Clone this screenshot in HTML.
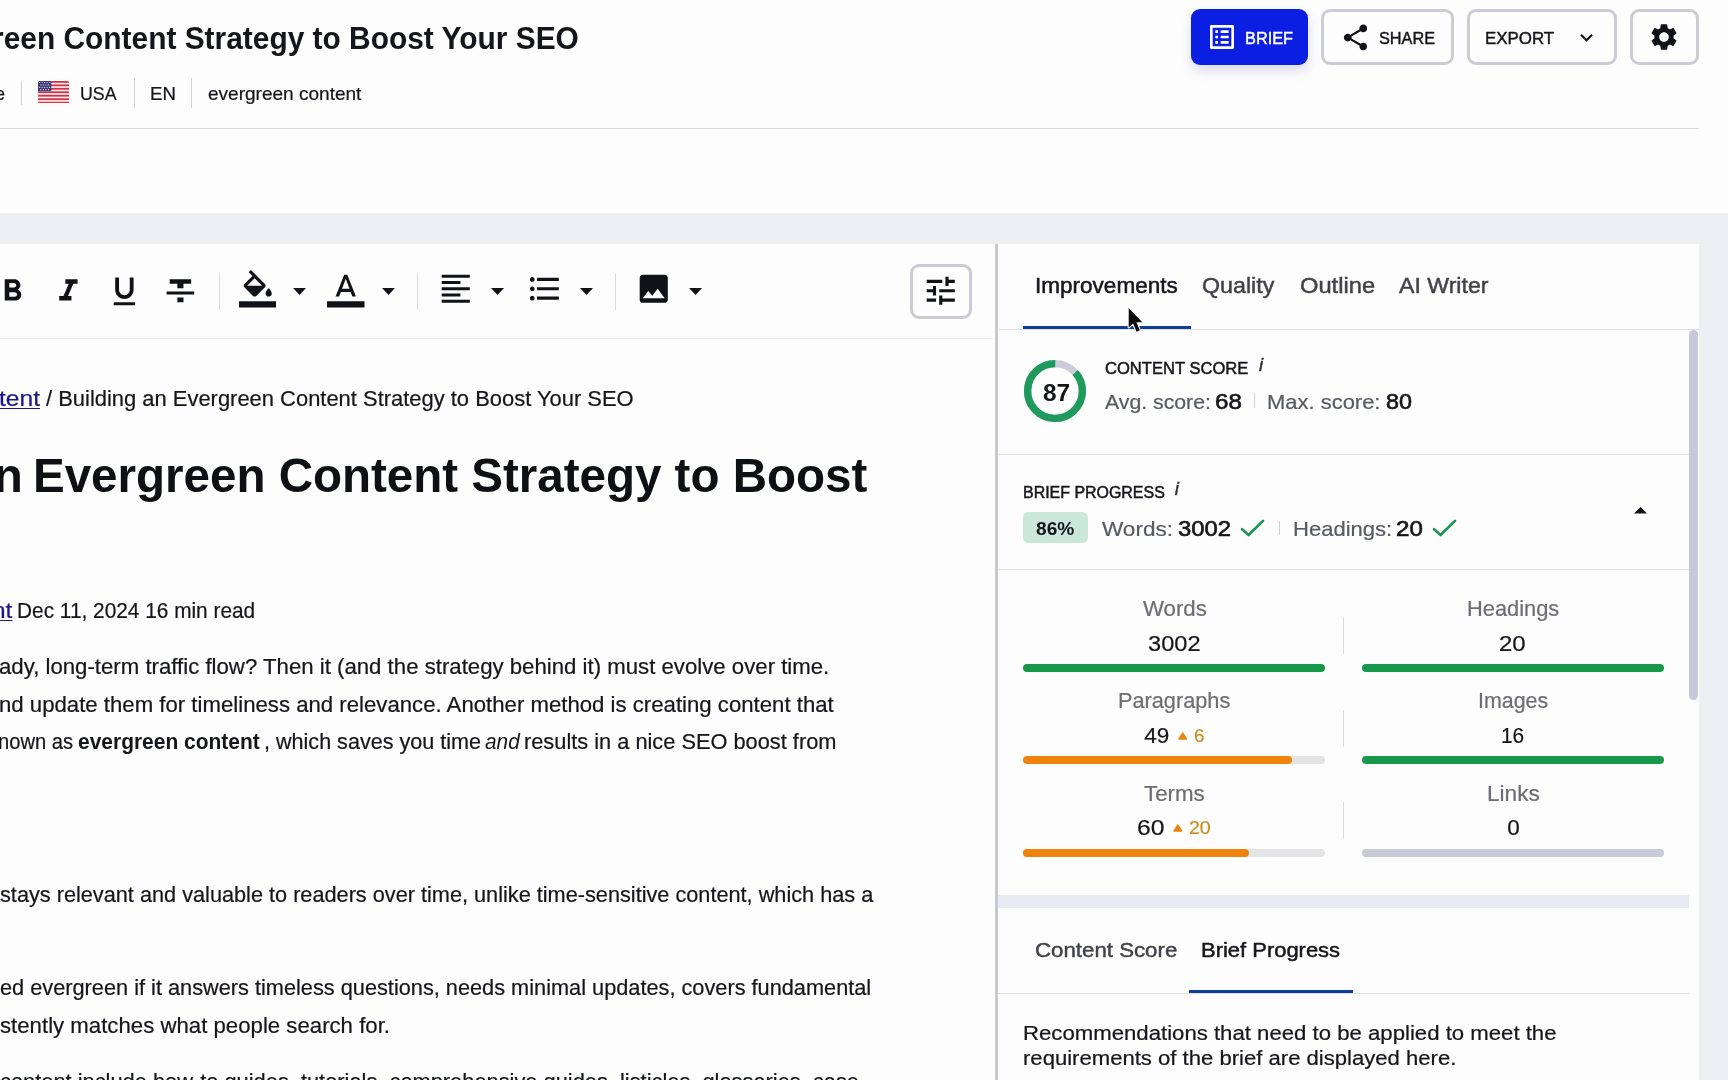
<!DOCTYPE html>
<html lang="en">
<head>
<meta charset="utf-8">
<title>Building an Evergreen Content Strategy to Boost Your SEO</title>
<style>
*{box-sizing:border-box;margin:0;padding:0}
html,body{width:1728px;height:1080px;overflow:hidden;background:#eeeff3}
body{position:relative;will-change:transform;font-family:"Liberation Sans",sans-serif;color:#15161c}
.abs,.t,svg.i{position:absolute}
.t{white-space:nowrap;line-height:1;display:block;transform-origin:0 0;color:#15161c;text-decoration:none}
a.t{text-decoration:underline}
.hdr{left:0;top:0;width:1728px;height:213px;background:#fdfdfd}
.hline{left:0;top:127.5px;width:1699px;height:1.5px;background:#d9dadd}
.vd{width:1px;background:#d2d3d8}
.btn{top:9px;height:56px;border:3px solid #cbccd5;border-radius:9px;background:#fdfdfd}
.btn.primary{border:0;background:#0b1fe3;box-shadow:0 6px 12px rgba(60,70,160,.18)}
.editor{left:0;top:244px;width:995px;height:836px;background:#fdfdfd}
.split{left:995px;top:244px;width:3px;height:836px;background:#c9c8d5}
.side{left:998px;top:244px;width:701px;height:836px;background:#fdfdfd}
.tbline{left:0;top:338px;width:993px;height:1px;background:#ececee}
.sline{height:1px;background:#e3e3e6;left:998px;width:691px}
.bar{height:8px;border-radius:4px}
.g{background:#18984a}.o{background:#ee830d}.tr{background:#e4e4e6}.n{background:#c9cad6}
.cd{width:1px;background:#dcdce0;left:1342.5px}
</style>
</head>
<body>
<!-- ===== top header ===== -->
<header>
<div class="abs hdr"></div>
<div class="abs hline"></div>
<div class="abs vd" style="left:21.3px;top:80.5px;height:24px"></div>
<div class="abs vd" style="left:133.6px;top:78px;height:30px"></div>
<div class="abs vd" style="left:191.3px;top:78px;height:30px"></div>
<svg class="i" style="left:38px;top:80.5px" width="31.3" height="22.5" viewBox="0 0 31.3 22.5"><defs><clipPath id="fc"><rect width="31.3" height="22.5" rx="2.2"/></clipPath></defs><g clip-path="url(#fc)"><rect width="31.3" height="22.5" fill="#fbeaec"/><rect y="0.00" width="31.3" height="1.73" fill="#d23145"/><rect y="3.46" width="31.3" height="1.73" fill="#d23145"/><rect y="6.92" width="31.3" height="1.73" fill="#d23145"/><rect y="10.38" width="31.3" height="1.73" fill="#d23145"/><rect y="13.85" width="31.3" height="1.73" fill="#d23145"/><rect y="17.31" width="31.3" height="1.73" fill="#d23145"/><rect y="20.77" width="31.3" height="1.73" fill="#d23145"/><rect width="13.3" height="10.2" fill="#3b3b78"/><circle cx="1.60" cy="1.50" r="0.62" fill="#e9e9f4"/><circle cx="4.10" cy="1.50" r="0.62" fill="#e9e9f4"/><circle cx="6.60" cy="1.50" r="0.62" fill="#e9e9f4"/><circle cx="9.10" cy="1.50" r="0.62" fill="#e9e9f4"/><circle cx="11.60" cy="1.50" r="0.62" fill="#e9e9f4"/><circle cx="2.85" cy="3.90" r="0.62" fill="#e9e9f4"/><circle cx="5.35" cy="3.90" r="0.62" fill="#e9e9f4"/><circle cx="7.85" cy="3.90" r="0.62" fill="#e9e9f4"/><circle cx="10.35" cy="3.90" r="0.62" fill="#e9e9f4"/><circle cx="1.60" cy="6.30" r="0.62" fill="#e9e9f4"/><circle cx="4.10" cy="6.30" r="0.62" fill="#e9e9f4"/><circle cx="6.60" cy="6.30" r="0.62" fill="#e9e9f4"/><circle cx="9.10" cy="6.30" r="0.62" fill="#e9e9f4"/><circle cx="11.60" cy="6.30" r="0.62" fill="#e9e9f4"/><circle cx="2.85" cy="8.70" r="0.62" fill="#e9e9f4"/><circle cx="5.35" cy="8.70" r="0.62" fill="#e9e9f4"/><circle cx="7.85" cy="8.70" r="0.62" fill="#e9e9f4"/><circle cx="10.35" cy="8.70" r="0.62" fill="#e9e9f4"/></g></svg>
<!-- buttons -->
<div class="abs btn primary" style="left:1191px;width:117px"></div>
<div class="abs btn" style="left:1321px;width:133px"></div>
<div class="abs btn" style="left:1467px;width:150px"></div>
<div class="abs btn" style="left:1630px;width:69px"></div>
<svg class="i" style="left:1205.9px;top:20.9px" width="32" height="32" viewBox="0 0 24 24"><path fill="#ffffff" d="M19 5v14H5V5h14m1.1-2H3.9c-.5 0-.9.4-.9.9v16.2c0 .4.4.9.9.9h16.2c.4 0 .9-.5.9-.9V3.9c0-.5-.5-.9-.9-.9zM11 7h6v2h-6V7zm0 4h6v2h-6v-2zm0 4h6v2h-6zM7 7h2v2H7zm0 4h2v2H7zm0 4h2v2H7z"/></svg>
<svg class="i" style="left:1340.1px;top:21.6px" width="31" height="31" viewBox="0 0 24 24"><path fill="#111217" d="M18 16.08c-.76 0-1.44.3-1.96.77L8.91 12.7c.05-.23.09-.46.09-.7s-.04-.47-.09-.7l7.05-4.11c.54.5 1.25.81 2.04.81 1.66 0 3-1.34 3-3s-1.34-3-3-3-3 1.34-3 3c0 .24.04.47.09.7L8.04 9.81C7.5 9.31 6.79 9 6 9c-1.66 0-3 1.34-3 3s1.34 3 3 3c.79 0 1.5-.31 2.04-.81l7.12 4.16c-.05.21-.08.43-.08.65 0 1.61 1.31 2.92 2.92 2.92 1.61 0 2.92-1.31 2.92-2.92s-1.31-2.92-2.92-2.92z"/></svg>
<svg class="i" style="left:1573.8px;top:24.9px" width="25" height="25" viewBox="0 0 24 24"><path fill="#111217" d="M7.41 8.59L12 13.17l4.59-4.58L18 10l-6 6-6-6 1.41-1.41z"/></svg>
<svg class="i" style="left:1648px;top:20.9px" width="32" height="32" viewBox="0 0 24 24"><path fill="#111217" d="M19.14 12.94c.04-.3.06-.61.06-.94 0-.32-.02-.64-.07-.94l2.03-1.58c.18-.14.23-.41.12-.61l-1.92-3.32c-.12-.22-.37-.29-.59-.22l-2.39.96c-.5-.38-1.03-.7-1.62-.94l-.36-2.54c-.04-.24-.24-.41-.48-.41h-3.84c-.24 0-.43.17-.47.41l-.36 2.54c-.59.24-1.13.57-1.62.94l-2.39-.96c-.22-.08-.47 0-.59.22L2.74 8.87c-.12.21-.08.47.12.61l2.03 1.58c-.05.3-.09.63-.09.94s.02.64.07.94l-2.03 1.58c-.18.14-.23.41-.12.61l1.92 3.32c.12.22.37.29.59.22l2.39-.96c.5.38 1.03.7 1.62.94l.36 2.54c.05.24.24.41.48.41h3.84c.24 0 .44-.17.47-.41l.36-2.54c.59-.24 1.13-.56 1.62-.94l2.39.96c.22.08.47 0 .59-.22l1.92-3.32c.12-.22.07-.47-.12-.61l-2.01-1.58zM12 15.6c-1.98 0-3.6-1.62-3.6-3.6s1.62-3.6 3.6-3.6 3.6 1.62 3.6 3.6-1.62 3.6-3.6 3.6z"/></svg>

<span class="t" style="left:-7.90px;top:23.00px;font-size:31.5px;font-weight:700;transform:scaleX(0.9490);">reen Content Strategy to Boost Your SEO</span>
<span class="t" style="left:-5.25px;top:85.00px;font-size:18.5px;-webkit-text-stroke:0.22px #15161c;">e</span>
<span class="t" style="left:79.54px;top:85.00px;font-size:18.5px;transform:scaleX(0.9616);-webkit-text-stroke:0.22px #15161c;">USA</span>
<span class="t" style="left:149.99px;top:85.00px;font-size:18.5px;transform:scaleX(1.0069);-webkit-text-stroke:0.22px #15161c;">EN</span>
<span class="t" style="left:207.50px;top:85.00px;font-size:18.5px;transform:scaleX(1.0286);-webkit-text-stroke:0.22px #15161c;">evergreen content</span>
<span class="t" style="left:1245.01px;top:29.60px;font-size:16.5px;color:#ffffff;transform:scaleX(0.9892);-webkit-text-stroke:0.45px #ffffff;">BRIEF</span>
<span class="t" style="left:1379.00px;top:29.60px;font-size:16.5px;transform:scaleX(0.9852);-webkit-text-stroke:0.45px #15161c;">SHARE</span>
<span class="t" style="left:1484.98px;top:29.80px;font-size:16.5px;transform:scaleX(1.0230);-webkit-text-stroke:0.45px #15161c;">EXPORT</span>
</header>

<!-- ===== editor panel ===== -->
<main>
<div class="abs editor"></div>
<div class="abs tbline"></div>
<div class="abs vd" style="left:218.5px;top:273px;height:36.5px;background:#dadade"></div>
<div class="abs vd" style="left:416.7px;top:273px;height:36.5px;background:#dadade"></div>
<div class="abs vd" style="left:615px;top:273px;height:36.5px;background:#dadade"></div>
<div class="abs" style="left:909.5px;top:263.5px;width:62px;height:55px;border:3px solid #cbcad5;border-radius:9px"></div>
<svg class="i" style="left:-6.5px;top:272.5px" width="36.8" height="36.8" viewBox="0 0 24 24"><path fill="#111217" d="M15.6 10.79c.97-.67 1.65-1.77 1.65-2.79 0-2.26-1.75-4-4-4H7v14h7.04c2.09 0 3.71-1.7 3.71-3.79 0-1.52-.86-2.82-2.15-3.42zM10 6.5h3c.83 0 1.5.67 1.5 1.5s-.67 1.5-1.5 1.5h-3v-3zm3.5 9H10v-3h3.5c.83 0 1.5.67 1.5 1.5s-.67 1.5-1.5 1.5z"/></svg>
<svg class="i" style="left:49.8px;top:272.5px" width="36.8" height="36.8" viewBox="0 0 24 24"><path fill="#111217" d="M10 4v3h2.21l-3.42 8H6v3h8v-3h-2.21l3.42-8H18V4z"/></svg>
<svg class="i" style="left:106.2px;top:272.5px" width="36.8" height="36.8" viewBox="0 0 24 24"><path fill="#111217" d="M12 17c3.31 0 6-2.69 6-6V3h-2.5v8c0 1.93-1.57 3.5-3.5 3.5S8.5 12.93 8.5 11V3H6v8c0 3.31 2.69 6 6 6zm-7 2v2h14v-2H5z"/></svg>
<svg class="i" style="left:162.3px;top:272.5px" width="36.8" height="36.8" viewBox="0 0 24 24"><path fill="#111217" d="M10 19h4v-3h-4v3zM5 4v3h5v3h4V7h5V4H5zM3 14h18v-2H3v2z"/></svg>
<svg class="i" style="left:238.6px;top:270.2px" width="37.5" height="37.5" viewBox="0 0 24 24"><path fill="#111217" d="M16.56 8.94L7.62 0 6.21 1.41l2.38 2.38-5.15 5.15c-.59.59-.59 1.54 0 2.12l5.5 5.5c.29.29.68.44 1.06.44s.77-.15 1.06-.44l5.5-5.5c.59-.58.59-1.53 0-2.12zM5.21 10L10 5.21 14.79 10H5.21zM19 11.5s-2 2.17-2 3.5c0 1.1.9 2 2 2s2-.9 2-2c0-1.33-2-3.5-2-3.5zM0 20h24v4H0z"/></svg>
<svg class="i" style="left:327.3px;top:270.2px" width="37.5" height="37.5" viewBox="0 0 24 24"><path fill="#111217" d="M11 3L5.5 17h2.25l1.12-3h6.25l1.12 3h2.25L13 3h-2zm-1.38 9L12 5.67 14.38 12H9.62zM0 20h24v4H0z"/></svg>
<svg class="i" style="left:436.5px;top:270.3px" width="37.5" height="37.5" viewBox="0 0 24 24"><path fill="#111217" d="M15 15H3v2h12v-2zm0-8H3v2h12V7zM3 13h18v-2H3v2zm0 8h18v-2H3v2zM3 3v2h18V3H3z"/></svg>
<svg class="i" style="left:525.5px;top:270.2px" width="37.5" height="37.5" viewBox="0 0 24 24"><path fill="#111217" d="M4 10.5c-.83 0-1.5.67-1.5 1.5s.67 1.5 1.5 1.5 1.5-.67 1.5-1.5-.67-1.5-1.5-1.5zm0-6c-.83 0-1.5.67-1.5 1.5S3.17 7.5 4 7.5 5.5 6.83 5.5 6 4.83 4.5 4 4.5zm0 12c-.83 0-1.5.68-1.5 1.5s.68 1.5 1.5 1.5 1.5-.68 1.5-1.5-.67-1.5-1.5-1.5zM7 19h14v-2H7v2zm0-6h14v-2H7v2zm0-8v2h14V5H7z"/></svg>
<svg class="i" style="left:634.9px;top:270.3px" width="37.5" height="37.5" viewBox="0 0 24 24"><path fill="#111217" d="M21 19V5c0-1.1-.9-2-2-2H5c-1.1 0-2 .9-2 2v14c0 1.1.9 2 2 2h14c1.1 0 2-.9 2-2zM8.5 13.5l2.5 3.01L14.5 12l4.5 6H5l3.5-4.5z"/></svg>
<svg class="i" style="left:921.5px;top:272.2px" width="37.5" height="37.5" viewBox="0 0 24 24"><path fill="#111217" d="M3 17v2h6v-2H3zM3 5v2h10V5H3zm10 16v-2h8v-2h-8v-2h-2v6h2zM7 9v2H3v2h4v2h2V9H7zm14 4v-2H11v2h10zm-6-4h2V7h4V5h-4V3h-2v6z"/></svg>
<svg class="i" style="left:292.9px;top:288.2px" width="13.1" height="7" viewBox="0 0 13.1 7"><path fill="#111217" d="M0 0h13.1L6.55 7z"/></svg>
<svg class="i" style="left:382px;top:288.2px" width="13.1" height="7" viewBox="0 0 13.1 7"><path fill="#111217" d="M0 0h13.1L6.55 7z"/></svg>
<svg class="i" style="left:491.2px;top:288.2px" width="13.1" height="7" viewBox="0 0 13.1 7"><path fill="#111217" d="M0 0h13.1L6.55 7z"/></svg>
<svg class="i" style="left:579.8px;top:288.2px" width="13.1" height="7" viewBox="0 0 13.1 7"><path fill="#111217" d="M0 0h13.1L6.55 7z"/></svg>
<svg class="i" style="left:689.1px;top:288.2px" width="13.1" height="7" viewBox="0 0 13.1 7"><path fill="#111217" d="M0 0h13.1L6.55 7z"/></svg>
<a class="t" style="left:-1.00px;top:388.70px;font-size:21.5px;color:#1b1788;transform:scaleX(1.1424);-webkit-text-stroke:0.22px #1b1788;text-decoration-thickness:1.3px;text-underline-offset:1.5px;">tent</a>
<span class="t" style="left:45.70px;top:388.70px;font-size:21.5px;transform:scaleX(1.0201);-webkit-text-stroke:0.22px #15161c;">/ Building an Evergreen Content Strategy to Boost Your SEO</span>
<span class="t" style="left:-6.40px;top:451.70px;font-size:48px;font-weight:700;color:#0f1014;">n</span>
<span class="t" style="left:32.73px;top:451.70px;font-size:48px;font-weight:700;color:#0f1014;transform:scaleX(0.9899);">Evergreen Content Strategy to Boost</span>
<a class="t" style="left:-8.14px;top:601.30px;font-size:21.5px;color:#1b1788;transform:scaleX(1.1382);-webkit-text-stroke:0.22px #1b1788;text-decoration-thickness:1.3px;text-underline-offset:1.5px;">nt</a>
<span class="t" style="left:16.73px;top:601.30px;font-size:21.5px;transform:scaleX(0.9690);-webkit-text-stroke:0.22px #15161c;">Dec 11, 2024 16 min read</span>
<span class="t" style="left:-1.00px;top:657.30px;font-size:21.5px;transform:scaleX(1.0324);-webkit-text-stroke:0.22px #15161c;">ady, long-term traffic flow? Then it (and the strategy behind it) must evolve over time.</span>
<span class="t" style="left:-1.03px;top:694.70px;font-size:21.5px;transform:scaleX(1.0317);-webkit-text-stroke:0.22px #15161c;">nd update them for timeliness and relevance. Another method is creating content that</span>
<span class="t" style="left:-1.94px;top:732.30px;font-size:21.5px;transform:scaleX(0.9383);-webkit-text-stroke:0.22px #15161c;">nown as</span>
<span class="t" style="left:77.70px;top:732.30px;font-size:21.5px;font-weight:700;transform:scaleX(0.9751);">evergreen content</span>
<span class="t" style="left:264.00px;top:732.30px;font-size:21.5px;transform:scaleX(1.0032);-webkit-text-stroke:0.22px #15161c;">, which saves you time</span>
<span class="t" style="left:485.00px;top:732.30px;font-size:21.5px;font-style:italic;transform:scaleX(0.9671);">and</span>
<span class="t" style="left:523.99px;top:732.30px;font-size:21.5px;transform:scaleX(1.0134);-webkit-text-stroke:0.22px #15161c;">results in a nice SEO boost from</span>
<span class="t" style="left:0.00px;top:884.70px;font-size:21.5px;transform:scaleX(1.0093);-webkit-text-stroke:0.22px #15161c;">stays relevant and valuable to readers over time, unlike time-sensitive content, which has a</span>
<span class="t" style="left:0.00px;top:978.00px;font-size:21.5px;transform:scaleX(1.0111);-webkit-text-stroke:0.22px #15161c;">ed evergreen if it answers timeless questions, needs minimal updates, covers fundamental</span>
<span class="t" style="left:0.00px;top:1015.70px;font-size:21.5px;transform:scaleX(1.0327);-webkit-text-stroke:0.22px #15161c;">stently matches what people search for.</span>
<span class="t" style="left:0.00px;top:1071.50px;font-size:21.5px;transform:scaleX(1.0152);-webkit-text-stroke:0.22px #15161c;">content include how-to guides, tutorials, comprehensive guides, listicles, glossaries, case</span>
</main>
<div class="abs split"></div>

<!-- ===== side panel ===== -->
<aside>
<div class="abs side"></div>
<div class="abs sline" style="top:329px;left:999px;width:700px;background:#dfdfe2"></div>
<div class="abs" style="left:1023.2px;top:325.5px;width:167.6px;height:3.3px;background:#0c3f96"></div>
<div class="abs sline" style="top:453.5px"></div>
<div class="abs sline" style="top:568.5px"></div>
<!-- scrollbar -->
<div class="abs" style="left:1689.2px;top:330px;width:9.3px;height:370px;border-radius:5px;background:#c7c8d9"></div>
<!--RING-->
<!-- badge -->
<div class="abs" style="left:1023.2px;top:512px;width:65px;height:31px;border-radius:5.5px;background:#cbe7dc"></div>
<div class="abs vd" style="left:1253.5px;top:393px;height:14.5px;background:#cfd0d6"></div>
<div class="abs vd" style="left:1279.2px;top:520.5px;height:14.5px;background:#cfd0d6"></div>
<!-- stat bars -->
<div class="abs bar g" style="left:1023.2px;top:664.2px;width:301.8px"></div>
<div class="abs bar g" style="left:1362.3px;top:664.2px;width:302px"></div>
<div class="abs bar tr" style="left:1023.2px;top:756.2px;width:301.8px"></div>
<div class="abs bar o" style="left:1023.2px;top:756.2px;width:268.8px"></div>
<div class="abs bar g" style="left:1362.3px;top:756.2px;width:302px"></div>
<div class="abs bar tr" style="left:1023.2px;top:848.8px;width:301.8px"></div>
<div class="abs bar o" style="left:1023.2px;top:848.8px;width:226px"></div>
<div class="abs bar n" style="left:1362.3px;top:848.8px;width:302px"></div>
<div class="abs cd" style="top:617px;height:36.5px"></div>
<div class="abs cd" style="top:710px;height:36.5px"></div>
<div class="abs cd" style="top:802px;height:36.5px"></div>
<!-- separator band -->
<div class="abs" style="left:998px;top:894.5px;width:691px;height:13.5px;background:#e9eaf4"></div>
<div class="abs sline" style="top:993px;background:#dfdfe3"></div>
<div class="abs" style="left:1189.2px;top:989.5px;width:163.8px;height:3.3px;background:#0c3f96"></div>
<svg class="i" style="left:1023.3px;top:359.1px" width="64" height="64" viewBox="-32 -32 64 64"><circle r="27.4" fill="none" stroke="#cdcbda" stroke-width="7.2"/><circle r="27.4" fill="none" stroke="#1f9a5d" stroke-width="7.4" stroke-dasharray="149.43 172.16" transform="rotate(-42.5)"/></svg>
<svg class="i" style="left:1239px;top:517px" width="28" height="22" viewBox="0 0 28 22"><path d="M3.1 12.3 L9.6 17.9 L24 3.9" fill="none" stroke="#1b9556" stroke-width="2.7" stroke-linecap="round" stroke-linejoin="miter"/></svg>
<svg class="i" style="left:1431.25px;top:517px" width="28" height="22" viewBox="0 0 28 22"><path d="M3.1 12.3 L9.6 17.9 L24 3.9" fill="none" stroke="#1b9556" stroke-width="2.7" stroke-linecap="round" stroke-linejoin="miter"/></svg>
<svg class="i" style="left:1634.2px;top:507.4px" width="13.1" height="6.5" viewBox="0 0 13.1 6.5"><path fill="#111217" d="M0 6.5h13.1L6.55 0z"/></svg>
<svg class="i" style="left:1177.5px;top:732px" width="9.6" height="8" viewBox="0 0 9.6 8"><path fill="#e8860f" stroke="#e8860f" stroke-width="1.6" stroke-linejoin="round" d="M4.8 1.2 L8.6 7 H1 Z"/></svg>
<svg class="i" style="left:1173px;top:824.2px" width="9.6" height="8" viewBox="0 0 9.6 8"><path fill="#e8860f" stroke="#e8860f" stroke-width="1.6" stroke-linejoin="round" d="M4.8 1.2 L8.6 7 H1 Z"/></svg>


<span class="t" style="left:1035.35px;top:276.00px;font-size:21.5px;transform:scaleX(1.0479);-webkit-text-stroke:0.5px #15161c;">Improvements</span>
<span class="t" style="left:1202.42px;top:276.00px;font-size:21.5px;color:#414249;transform:scaleX(1.0806);-webkit-text-stroke:0.45px #414249;">Quality</span>
<span class="t" style="left:1299.70px;top:276.00px;font-size:21.5px;color:#414249;transform:scaleX(1.1018);-webkit-text-stroke:0.45px #414249;">Outline</span>
<span class="t" style="left:1399.40px;top:276.00px;font-size:21.5px;color:#414249;transform:scaleX(1.0751);-webkit-text-stroke:0.45px #414249;">AI Writer</span>
<span class="t" style="left:1042.70px;top:381.50px;font-size:23.5px;font-weight:700;transform:scaleX(1.0395);">87</span>
<span class="t" style="left:1104.70px;top:360.60px;font-size:16.7px;transform:scaleX(0.9934);-webkit-text-stroke:0.5px #15161c;">CONTENT SCORE</span>
<span class="t" style="left:1259.10px;top:356.00px;font-size:18.7px;font-style:italic;color:#2b2e38;-webkit-text-stroke:0.4px #2b2e38;">i</span>
<span class="t" style="left:1105.00px;top:390.75px;font-size:21px;color:#585b65;transform:scaleX(1.0114);-webkit-text-stroke:0.22px #585b65;">Avg. score:</span>
<span class="t" style="left:1214.88px;top:391.75px;font-size:21.5px;transform:scaleX(1.1216);-webkit-text-stroke:0.6px #15161c;">68</span>
<span class="t" style="left:1267.20px;top:390.75px;font-size:21px;color:#585b65;transform:scaleX(1.0455);-webkit-text-stroke:0.22px #585b65;">Max. score:</span>
<span class="t" style="left:1386.00px;top:391.75px;font-size:21.5px;transform:scaleX(1.0853);-webkit-text-stroke:0.6px #15161c;">80</span>
<span class="t" style="left:1022.84px;top:484.70px;font-size:16.7px;transform:scaleX(0.9556);-webkit-text-stroke:0.5px #15161c;">BRIEF PROGRESS</span>
<span class="t" style="left:1174.70px;top:479.50px;font-size:18.7px;font-style:italic;color:#2b2e38;-webkit-text-stroke:0.4px #2b2e38;">i</span>
<span class="t" style="left:1036.40px;top:521.00px;font-size:17.5px;font-weight:700;transform:scaleX(1.0940);">86%</span>
<span class="t" style="left:1102.00px;top:517.50px;font-size:21px;color:#585b65;transform:scaleX(1.0732);-webkit-text-stroke:0.22px #585b65;">Words:</span>
<span class="t" style="left:1177.50px;top:518.50px;font-size:21.5px;transform:scaleX(1.1094);-webkit-text-stroke:0.6px #15161c;">3002</span>
<span class="t" style="left:1292.70px;top:517.50px;font-size:21px;color:#585b65;transform:scaleX(1.0493);-webkit-text-stroke:0.22px #585b65;">Headings:</span>
<span class="t" style="left:1395.63px;top:518.50px;font-size:21.5px;transform:scaleX(1.1216);-webkit-text-stroke:0.6px #15161c;">20</span>
<span class="t" style="left:1142.50px;top:599.25px;font-size:21.5px;color:#6c6d76;transform:scaleX(1.0332);-webkit-text-stroke:0.22px #6c6d76;">Words</span>
<span class="t" style="left:1148.00px;top:632.75px;font-size:22.5px;transform:scaleX(1.0497);-webkit-text-stroke:0.22px #15161c;">3002</span>
<span class="t" style="left:1466.98px;top:599.25px;font-size:21.5px;color:#6c6d76;transform:scaleX(1.0158);-webkit-text-stroke:0.22px #6c6d76;">Headings</span>
<span class="t" style="left:1499.44px;top:632.75px;font-size:22.5px;transform:scaleX(1.0632);-webkit-text-stroke:0.22px #15161c;">20</span>
<span class="t" style="left:1117.74px;top:691.00px;font-size:21.5px;color:#6c6d76;transform:scaleX(1.0100);-webkit-text-stroke:0.22px #6c6d76;">Paragraphs</span>
<span class="t" style="left:1144.25px;top:724.50px;font-size:22.5px;-webkit-text-stroke:0.22px #15161c;">49</span>
<span class="t" style="left:1194.00px;top:727.00px;font-size:18.8px;color:#cf8a1f;-webkit-text-stroke:0.22px #cf8a1f;">6</span>
<span class="t" style="left:1478.25px;top:691.00px;font-size:21.5px;color:#6c6d76;transform:scaleX(0.9963);-webkit-text-stroke:0.22px #6c6d76;">Images</span>
<span class="t" style="left:1501.32px;top:724.50px;font-size:22.5px;transform:scaleX(0.9250);-webkit-text-stroke:0.22px #15161c;">16</span>
<span class="t" style="left:1144.25px;top:783.75px;font-size:21.5px;color:#6c6d76;transform:scaleX(1.0385);-webkit-text-stroke:0.22px #6c6d76;">Terms</span>
<span class="t" style="left:1136.90px;top:816.50px;font-size:22.5px;transform:scaleX(1.0951);-webkit-text-stroke:0.22px #15161c;">60</span>
<span class="t" style="left:1188.75px;top:819.00px;font-size:18.8px;color:#cf8a1f;transform:scaleX(1.0394);-webkit-text-stroke:0.22px #cf8a1f;">20</span>
<span class="t" style="left:1486.95px;top:783.75px;font-size:21.5px;color:#6c6d76;transform:scaleX(1.0528);-webkit-text-stroke:0.22px #6c6d76;">Links</span>
<span class="t" style="left:1507.25px;top:816.50px;font-size:22.5px;-webkit-text-stroke:0.22px #15161c;">0</span>
<span class="t" style="left:1035.19px;top:939.00px;font-size:21px;color:#414249;transform:scaleX(1.0599);-webkit-text-stroke:0.45px #414249;">Content Score</span>
<span class="t" style="left:1201.45px;top:939.00px;font-size:21px;transform:scaleX(1.0453);-webkit-text-stroke:0.5px #15161c;">Brief Progress</span>
<span class="t" style="left:1022.64px;top:1022.50px;font-size:20px;transform:scaleX(1.1082);-webkit-text-stroke:0.22px #15161c;">Recommendations that need to be applied to meet the</span>
<span class="t" style="left:1022.65px;top:1047.50px;font-size:20px;transform:scaleX(1.1043);-webkit-text-stroke:0.22px #15161c;">requirements of the brief are displayed here.</span>
<!-- mouse pointer -->
<svg class="i" style="left:1126px;top:305px" width="22" height="32" viewBox="0 0 22 32"><path transform="translate(2.7 3.1)" d="M0 0 V19.3 L4.4 15.3 L7.9 23.6 L11.1 22.2 L7.7 14.2 H13.6 Z" fill="#0b0b0d" stroke="#ffffff" stroke-width="2.2" stroke-linejoin="round" paint-order="stroke"/></svg>
</aside>
</body>
</html>
